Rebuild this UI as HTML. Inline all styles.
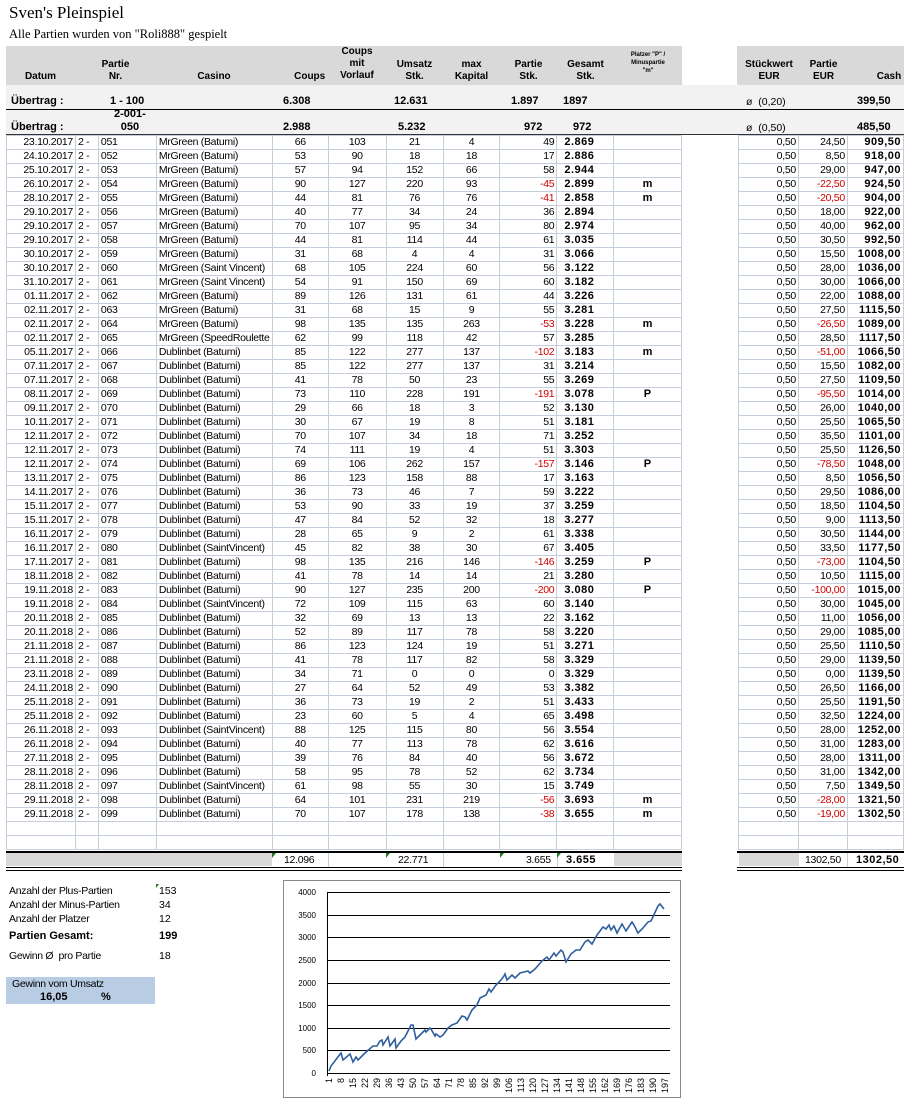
<!DOCTYPE html>
<html><head><meta charset="utf-8"><style>
body{margin:0;width:904px;height:1101px;background:#fff;position:relative;font-family:"Liberation Sans",sans-serif;overflow:hidden}
.a{position:absolute;white-space:nowrap}
table{border-collapse:collapse;table-layout:fixed;position:absolute;left:6px;font-size:10.5px;letter-spacing:-0.3px}
td{height:13px;padding:0 2px;border:1px solid #c5cfdc;overflow:hidden;white-space:nowrap;line-height:13px}
td.g{border:none}
.r{text-align:right}.c{text-align:center}.b{font-weight:bold}.n{color:#d00000}
td.b{font-size:11px;letter-spacing:0.5px}
td:nth-child(10){padding-left:7px}
.hd{font-weight:bold;font-size:10px;text-align:center;line-height:12px}
</style></head><body>
<div class="a" style="left:9px;top:3px;font-family:'Liberation Serif',serif;font-size:17px">Sven's Pleinspiel</div>
<div class="a" style="left:9px;top:27px;font-family:'Liberation Serif',serif;font-size:12.5px">Alle Partien wurden von "Roli888" gespielt</div>
<div class="a" style="left:6px;top:46px;width:676px;height:39px;background:#d9d9d9"></div>
<div class="a" style="left:737px;top:46px;width:167px;height:39px;background:#d9d9d9"></div>
<div class="a" style="left:6px;top:85px;width:898px;height:49px;background:#f2f2f2"></div>
<div class="a" style="left:6px;top:109px;width:898px;height:1px;background:#000"></div>
<div class="a" style="left:6px;top:134px;width:898px;height:1px;background:#333"></div>
<div class="a hd" style="left:6px;top:71px;width:69px">Datum</div>
<div class="a hd" style="left:75px;top:59px;width:81px">Partie<br>Nr.</div>
<div class="a hd" style="left:156px;top:71px;width:116px">Casino</div>
<div class="a hd" style="left:272px;top:71px;width:56px;text-align:right">Coups&nbsp;</div>
<div class="a hd" style="left:328px;top:46px;width:58px">Coups<br>mit<br>Vorlauf</div>
<div class="a hd" style="left:386px;top:59px;width:57px">Umsatz<br>Stk.</div>
<div class="a hd" style="left:443px;top:59px;width:57px">max<br>Kapital</div>
<div class="a hd" style="left:500px;top:59px;width:57px">Partie<br>Stk.</div>
<div class="a hd" style="left:557px;top:59px;width:57px">Gesamt<br>Stk.</div>
<div class="a hd" style="left:614px;top:51px;width:68px;font-size:6px;line-height:8px">Platzer "P" /<br>Minuspartie<br>"m"</div>
<div class="a hd" style="left:739px;top:59px;width:60px">Stückwert<br>EUR</div>
<div class="a hd" style="left:799px;top:59px;width:49px">Partie<br>EUR</div>
<div class="a hd" style="left:848px;top:71px;width:56px;text-align:right">Cash&nbsp;</div>
<div class="a b" style="left:11px;top:95px;font-size:11px">Übertrag :</div>
<div class="a b" style="left:110px;top:95px;font-size:11px">1 - 100</div>
<div class="a b" style="left:283px;top:95px;font-size:11px">6.308</div>
<div class="a b" style="left:394px;top:95px;font-size:11px">12.631</div>
<div class="a b" style="left:511px;top:95px;font-size:11px">1.897</div>
<div class="a b" style="left:563px;top:95px;font-size:11px">1897</div>
<div class="a" style="left:746px;top:96px;font-size:10.5px">ø&nbsp; (0,20)</div>
<div class="a b" style="left:857px;top:95px;font-size:11px">399,50</div>
<div class="a b" style="left:11px;top:121px;font-size:11px">Übertrag :</div>
<div class="a b" style="left:114px;top:108px;font-size:11px;line-height:13px;text-align:center">2-001-<br>050</div>
<div class="a b" style="left:283px;top:121px;font-size:11px">2.988</div>
<div class="a b" style="left:398px;top:121px;font-size:11px">5.232</div>
<div class="a b" style="left:524px;top:121px;font-size:11px">972</div>
<div class="a b" style="left:573px;top:121px;font-size:11px">972</div>
<div class="a" style="left:746px;top:122px;font-size:10.5px">ø&nbsp; (0,50)</div>
<div class="a b" style="left:857px;top:121px;font-size:11px">485,50</div>

<table style="top:135px">
<colgroup><col style="width:69px"><col style="width:23px"><col style="width:58px"><col style="width:116px"><col style="width:56px"><col style="width:58px"><col style="width:57px"><col style="width:57px"><col style="width:57px"><col style="width:57px"><col style="width:68px"><col style="width:57px"><col style="width:60px"><col style="width:49px"><col style="width:56px"></colgroup>
<tr><td class="r">23.10.2017</td><td>2 -</td><td>051</td><td>MrGreen (Batumi)</td><td class="c">66</td><td class="c">103</td><td class="c">21</td><td class="c">4</td><td class="r">49</td><td class="b">2.869</td><td></td><td class="g"></td><td class="r">0,50</td><td class="r">24,50</td><td class="r b">909,50</td></tr>
<tr><td class="r">24.10.2017</td><td>2 -</td><td>052</td><td>MrGreen (Batumi)</td><td class="c">53</td><td class="c">90</td><td class="c">18</td><td class="c">18</td><td class="r">17</td><td class="b">2.886</td><td></td><td class="g"></td><td class="r">0,50</td><td class="r">8,50</td><td class="r b">918,00</td></tr>
<tr><td class="r">25.10.2017</td><td>2 -</td><td>053</td><td>MrGreen (Batumi)</td><td class="c">57</td><td class="c">94</td><td class="c">152</td><td class="c">66</td><td class="r">58</td><td class="b">2.944</td><td></td><td class="g"></td><td class="r">0,50</td><td class="r">29,00</td><td class="r b">947,00</td></tr>
<tr><td class="r">26.10.2017</td><td>2 -</td><td>054</td><td>MrGreen (Batumi)</td><td class="c">90</td><td class="c">127</td><td class="c">220</td><td class="c">93</td><td class="r n">-45</td><td class="b">2.899</td><td class="c b">m</td><td class="g"></td><td class="r">0,50</td><td class="r n">-22,50</td><td class="r b">924,50</td></tr>
<tr><td class="r">28.10.2017</td><td>2 -</td><td>055</td><td>MrGreen (Batumi)</td><td class="c">44</td><td class="c">81</td><td class="c">76</td><td class="c">76</td><td class="r n">-41</td><td class="b">2.858</td><td class="c b">m</td><td class="g"></td><td class="r">0,50</td><td class="r n">-20,50</td><td class="r b">904,00</td></tr>
<tr><td class="r">29.10.2017</td><td>2 -</td><td>056</td><td>MrGreen (Batumi)</td><td class="c">40</td><td class="c">77</td><td class="c">34</td><td class="c">24</td><td class="r">36</td><td class="b">2.894</td><td></td><td class="g"></td><td class="r">0,50</td><td class="r">18,00</td><td class="r b">922,00</td></tr>
<tr><td class="r">29.10.2017</td><td>2 -</td><td>057</td><td>MrGreen (Batumi)</td><td class="c">70</td><td class="c">107</td><td class="c">95</td><td class="c">34</td><td class="r">80</td><td class="b">2.974</td><td></td><td class="g"></td><td class="r">0,50</td><td class="r">40,00</td><td class="r b">962,00</td></tr>
<tr><td class="r">29.10.2017</td><td>2 -</td><td>058</td><td>MrGreen (Batumi)</td><td class="c">44</td><td class="c">81</td><td class="c">114</td><td class="c">44</td><td class="r">61</td><td class="b">3.035</td><td></td><td class="g"></td><td class="r">0,50</td><td class="r">30,50</td><td class="r b">992,50</td></tr>
<tr><td class="r">30.10.2017</td><td>2 -</td><td>059</td><td>MrGreen (Batumi)</td><td class="c">31</td><td class="c">68</td><td class="c">4</td><td class="c">4</td><td class="r">31</td><td class="b">3.066</td><td></td><td class="g"></td><td class="r">0,50</td><td class="r">15,50</td><td class="r b">1008,00</td></tr>
<tr><td class="r">30.10.2017</td><td>2 -</td><td>060</td><td>MrGreen (Saint Vincent)</td><td class="c">68</td><td class="c">105</td><td class="c">224</td><td class="c">60</td><td class="r">56</td><td class="b">3.122</td><td></td><td class="g"></td><td class="r">0,50</td><td class="r">28,00</td><td class="r b">1036,00</td></tr>
<tr><td class="r">31.10.2017</td><td>2 -</td><td>061</td><td>MrGreen (Saint Vincent)</td><td class="c">54</td><td class="c">91</td><td class="c">150</td><td class="c">69</td><td class="r">60</td><td class="b">3.182</td><td></td><td class="g"></td><td class="r">0,50</td><td class="r">30,00</td><td class="r b">1066,00</td></tr>
<tr><td class="r">01.11.2017</td><td>2 -</td><td>062</td><td>MrGreen (Batumi)</td><td class="c">89</td><td class="c">126</td><td class="c">131</td><td class="c">61</td><td class="r">44</td><td class="b">3.226</td><td></td><td class="g"></td><td class="r">0,50</td><td class="r">22,00</td><td class="r b">1088,00</td></tr>
<tr><td class="r">02.11.2017</td><td>2 -</td><td>063</td><td>MrGreen (Batumi)</td><td class="c">31</td><td class="c">68</td><td class="c">15</td><td class="c">9</td><td class="r">55</td><td class="b">3.281</td><td></td><td class="g"></td><td class="r">0,50</td><td class="r">27,50</td><td class="r b">1115,50</td></tr>
<tr><td class="r">02.11.2017</td><td>2 -</td><td>064</td><td>MrGreen (Batumi)</td><td class="c">98</td><td class="c">135</td><td class="c">135</td><td class="c">263</td><td class="r n">-53</td><td class="b">3.228</td><td class="c b">m</td><td class="g"></td><td class="r">0,50</td><td class="r n">-26,50</td><td class="r b">1089,00</td></tr>
<tr><td class="r">02.11.2017</td><td>2 -</td><td>065</td><td>MrGreen (SpeedRoulette</td><td class="c">62</td><td class="c">99</td><td class="c">118</td><td class="c">42</td><td class="r">57</td><td class="b">3.285</td><td></td><td class="g"></td><td class="r">0,50</td><td class="r">28,50</td><td class="r b">1117,50</td></tr>
<tr><td class="r">05.11.2017</td><td>2 -</td><td>066</td><td>Dublinbet (Batumi)</td><td class="c">85</td><td class="c">122</td><td class="c">277</td><td class="c">137</td><td class="r n">-102</td><td class="b">3.183</td><td class="c b">m</td><td class="g"></td><td class="r">0,50</td><td class="r n">-51,00</td><td class="r b">1066,50</td></tr>
<tr><td class="r">07.11.2017</td><td>2 -</td><td>067</td><td>Dublinbet (Batumi)</td><td class="c">85</td><td class="c">122</td><td class="c">277</td><td class="c">137</td><td class="r">31</td><td class="b">3.214</td><td></td><td class="g"></td><td class="r">0,50</td><td class="r">15,50</td><td class="r b">1082,00</td></tr>
<tr><td class="r">07.11.2017</td><td>2 -</td><td>068</td><td>Dublinbet (Batumi)</td><td class="c">41</td><td class="c">78</td><td class="c">50</td><td class="c">23</td><td class="r">55</td><td class="b">3.269</td><td></td><td class="g"></td><td class="r">0,50</td><td class="r">27,50</td><td class="r b">1109,50</td></tr>
<tr><td class="r">08.11.2017</td><td>2 -</td><td>069</td><td>Dublinbet (Batumi)</td><td class="c">73</td><td class="c">110</td><td class="c">228</td><td class="c">191</td><td class="r n">-191</td><td class="b">3.078</td><td class="c b">P</td><td class="g"></td><td class="r">0,50</td><td class="r n">-95,50</td><td class="r b">1014,00</td></tr>
<tr><td class="r">09.11.2017</td><td>2 -</td><td>070</td><td>Dublinbet (Batumi)</td><td class="c">29</td><td class="c">66</td><td class="c">18</td><td class="c">3</td><td class="r">52</td><td class="b">3.130</td><td></td><td class="g"></td><td class="r">0,50</td><td class="r">26,00</td><td class="r b">1040,00</td></tr>
<tr><td class="r">10.11.2017</td><td>2 -</td><td>071</td><td>Dublinbet (Batumi)</td><td class="c">30</td><td class="c">67</td><td class="c">19</td><td class="c">8</td><td class="r">51</td><td class="b">3.181</td><td></td><td class="g"></td><td class="r">0,50</td><td class="r">25,50</td><td class="r b">1065,50</td></tr>
<tr><td class="r">12.11.2017</td><td>2 -</td><td>072</td><td>Dublinbet (Batumi)</td><td class="c">70</td><td class="c">107</td><td class="c">34</td><td class="c">18</td><td class="r">71</td><td class="b">3.252</td><td></td><td class="g"></td><td class="r">0,50</td><td class="r">35,50</td><td class="r b">1101,00</td></tr>
<tr><td class="r">12.11.2017</td><td>2 -</td><td>073</td><td>Dublinbet (Batumi)</td><td class="c">74</td><td class="c">111</td><td class="c">19</td><td class="c">4</td><td class="r">51</td><td class="b">3.303</td><td></td><td class="g"></td><td class="r">0,50</td><td class="r">25,50</td><td class="r b">1126,50</td></tr>
<tr><td class="r">12.11.2017</td><td>2 -</td><td>074</td><td>Dublinbet (Batumi)</td><td class="c">69</td><td class="c">106</td><td class="c">262</td><td class="c">157</td><td class="r n">-157</td><td class="b">3.146</td><td class="c b">P</td><td class="g"></td><td class="r">0,50</td><td class="r n">-78,50</td><td class="r b">1048,00</td></tr>
<tr><td class="r">13.11.2017</td><td>2 -</td><td>075</td><td>Dublinbet (Batumi)</td><td class="c">86</td><td class="c">123</td><td class="c">158</td><td class="c">88</td><td class="r">17</td><td class="b">3.163</td><td></td><td class="g"></td><td class="r">0,50</td><td class="r">8,50</td><td class="r b">1056,50</td></tr>
<tr><td class="r">14.11.2017</td><td>2 -</td><td>076</td><td>Dublinbet (Batumi)</td><td class="c">36</td><td class="c">73</td><td class="c">46</td><td class="c">7</td><td class="r">59</td><td class="b">3.222</td><td></td><td class="g"></td><td class="r">0,50</td><td class="r">29,50</td><td class="r b">1086,00</td></tr>
<tr><td class="r">15.11.2017</td><td>2 -</td><td>077</td><td>Dublinbet (Batumi)</td><td class="c">53</td><td class="c">90</td><td class="c">33</td><td class="c">19</td><td class="r">37</td><td class="b">3.259</td><td></td><td class="g"></td><td class="r">0,50</td><td class="r">18,50</td><td class="r b">1104,50</td></tr>
<tr><td class="r">15.11.2017</td><td>2 -</td><td>078</td><td>Dublinbet (Batumi)</td><td class="c">47</td><td class="c">84</td><td class="c">52</td><td class="c">32</td><td class="r">18</td><td class="b">3.277</td><td></td><td class="g"></td><td class="r">0,50</td><td class="r">9,00</td><td class="r b">1113,50</td></tr>
<tr><td class="r">16.11.2017</td><td>2 -</td><td>079</td><td>Dublinbet (Batumi)</td><td class="c">28</td><td class="c">65</td><td class="c">9</td><td class="c">2</td><td class="r">61</td><td class="b">3.338</td><td></td><td class="g"></td><td class="r">0,50</td><td class="r">30,50</td><td class="r b">1144,00</td></tr>
<tr><td class="r">16.11.2017</td><td>2 -</td><td>080</td><td>Dublinbet (SaintVincent)</td><td class="c">45</td><td class="c">82</td><td class="c">38</td><td class="c">30</td><td class="r">67</td><td class="b">3.405</td><td></td><td class="g"></td><td class="r">0,50</td><td class="r">33,50</td><td class="r b">1177,50</td></tr>
<tr><td class="r">17.11.2017</td><td>2 -</td><td>081</td><td>Dublinbet (Batumi)</td><td class="c">98</td><td class="c">135</td><td class="c">216</td><td class="c">146</td><td class="r n">-146</td><td class="b">3.259</td><td class="c b">P</td><td class="g"></td><td class="r">0,50</td><td class="r n">-73,00</td><td class="r b">1104,50</td></tr>
<tr><td class="r">18.11.2018</td><td>2 -</td><td>082</td><td>Dublinbet (Batumi)</td><td class="c">41</td><td class="c">78</td><td class="c">14</td><td class="c">14</td><td class="r">21</td><td class="b">3.280</td><td></td><td class="g"></td><td class="r">0,50</td><td class="r">10,50</td><td class="r b">1115,00</td></tr>
<tr><td class="r">19.11.2018</td><td>2 -</td><td>083</td><td>Dublinbet (Batumi)</td><td class="c">90</td><td class="c">127</td><td class="c">235</td><td class="c">200</td><td class="r n">-200</td><td class="b">3.080</td><td class="c b">P</td><td class="g"></td><td class="r">0,50</td><td class="r n">-100,00</td><td class="r b">1015,00</td></tr>
<tr><td class="r">19.11.2018</td><td>2 -</td><td>084</td><td>Dublinbet (SaintVincent)</td><td class="c">72</td><td class="c">109</td><td class="c">115</td><td class="c">63</td><td class="r">60</td><td class="b">3.140</td><td></td><td class="g"></td><td class="r">0,50</td><td class="r">30,00</td><td class="r b">1045,00</td></tr>
<tr><td class="r">20.11.2018</td><td>2 -</td><td>085</td><td>Dublinbet (Batumi)</td><td class="c">32</td><td class="c">69</td><td class="c">13</td><td class="c">13</td><td class="r">22</td><td class="b">3.162</td><td></td><td class="g"></td><td class="r">0,50</td><td class="r">11,00</td><td class="r b">1056,00</td></tr>
<tr><td class="r">20.11.2018</td><td>2 -</td><td>086</td><td>Dublinbet (Batumi)</td><td class="c">52</td><td class="c">89</td><td class="c">117</td><td class="c">78</td><td class="r">58</td><td class="b">3.220</td><td></td><td class="g"></td><td class="r">0,50</td><td class="r">29,00</td><td class="r b">1085,00</td></tr>
<tr><td class="r">21.11.2018</td><td>2 -</td><td>087</td><td>Dublinbet (Batumi)</td><td class="c">86</td><td class="c">123</td><td class="c">124</td><td class="c">19</td><td class="r">51</td><td class="b">3.271</td><td></td><td class="g"></td><td class="r">0,50</td><td class="r">25,50</td><td class="r b">1110,50</td></tr>
<tr><td class="r">21.11.2018</td><td>2 -</td><td>088</td><td>Dublinbet (Batumi)</td><td class="c">41</td><td class="c">78</td><td class="c">117</td><td class="c">82</td><td class="r">58</td><td class="b">3.329</td><td></td><td class="g"></td><td class="r">0,50</td><td class="r">29,00</td><td class="r b">1139,50</td></tr>
<tr><td class="r">23.11.2018</td><td>2 -</td><td>089</td><td>Dublinbet (Batumi)</td><td class="c">34</td><td class="c">71</td><td class="c">0</td><td class="c">0</td><td class="r">0</td><td class="b">3.329</td><td></td><td class="g"></td><td class="r">0,50</td><td class="r">0,00</td><td class="r b">1139,50</td></tr>
<tr><td class="r">24.11.2018</td><td>2 -</td><td>090</td><td>Dublinbet (Batumi)</td><td class="c">27</td><td class="c">64</td><td class="c">52</td><td class="c">49</td><td class="r">53</td><td class="b">3.382</td><td></td><td class="g"></td><td class="r">0,50</td><td class="r">26,50</td><td class="r b">1166,00</td></tr>
<tr><td class="r">25.11.2018</td><td>2 -</td><td>091</td><td>Dublinbet (Batumi)</td><td class="c">36</td><td class="c">73</td><td class="c">19</td><td class="c">2</td><td class="r">51</td><td class="b">3.433</td><td></td><td class="g"></td><td class="r">0,50</td><td class="r">25,50</td><td class="r b">1191,50</td></tr>
<tr><td class="r">25.11.2018</td><td>2 -</td><td>092</td><td>Dublinbet (Batumi)</td><td class="c">23</td><td class="c">60</td><td class="c">5</td><td class="c">4</td><td class="r">65</td><td class="b">3.498</td><td></td><td class="g"></td><td class="r">0,50</td><td class="r">32,50</td><td class="r b">1224,00</td></tr>
<tr><td class="r">26.11.2018</td><td>2 -</td><td>093</td><td>Dublinbet (SaintVincent)</td><td class="c">88</td><td class="c">125</td><td class="c">115</td><td class="c">80</td><td class="r">56</td><td class="b">3.554</td><td></td><td class="g"></td><td class="r">0,50</td><td class="r">28,00</td><td class="r b">1252,00</td></tr>
<tr><td class="r">26.11.2018</td><td>2 -</td><td>094</td><td>Dublinbet (Batumi)</td><td class="c">40</td><td class="c">77</td><td class="c">113</td><td class="c">78</td><td class="r">62</td><td class="b">3.616</td><td></td><td class="g"></td><td class="r">0,50</td><td class="r">31,00</td><td class="r b">1283,00</td></tr>
<tr><td class="r">27.11.2018</td><td>2 -</td><td>095</td><td>Dublinbet (Batumi)</td><td class="c">39</td><td class="c">76</td><td class="c">84</td><td class="c">40</td><td class="r">56</td><td class="b">3.672</td><td></td><td class="g"></td><td class="r">0,50</td><td class="r">28,00</td><td class="r b">1311,00</td></tr>
<tr><td class="r">28.11.2018</td><td>2 -</td><td>096</td><td>Dublinbet (Batumi)</td><td class="c">58</td><td class="c">95</td><td class="c">78</td><td class="c">52</td><td class="r">62</td><td class="b">3.734</td><td></td><td class="g"></td><td class="r">0,50</td><td class="r">31,00</td><td class="r b">1342,00</td></tr>
<tr><td class="r">28.11.2018</td><td>2 -</td><td>097</td><td>Dublinbet (SaintVincent)</td><td class="c">61</td><td class="c">98</td><td class="c">55</td><td class="c">30</td><td class="r">15</td><td class="b">3.749</td><td></td><td class="g"></td><td class="r">0,50</td><td class="r">7,50</td><td class="r b">1349,50</td></tr>
<tr><td class="r">29.11.2018</td><td>2 -</td><td>098</td><td>Dublinbet (Batumi)</td><td class="c">64</td><td class="c">101</td><td class="c">231</td><td class="c">219</td><td class="r n">-56</td><td class="b">3.693</td><td class="c b">m</td><td class="g"></td><td class="r">0,50</td><td class="r n">-28,00</td><td class="r b">1321,50</td></tr>
<tr><td class="r">29.11.2018</td><td>2 -</td><td>099</td><td>Dublinbet (Batumi)</td><td class="c">70</td><td class="c">107</td><td class="c">178</td><td class="c">138</td><td class="r n">-38</td><td class="b">3.655</td><td class="c b">m</td><td class="g"></td><td class="r">0,50</td><td class="r n">-19,00</td><td class="r b">1302,50</td></tr>
<tr><td></td><td></td><td></td><td></td><td></td><td></td><td></td><td></td><td></td><td></td><td></td><td class="g"></td><td></td><td></td><td></td></tr>
<tr><td></td><td></td><td></td><td></td><td></td><td></td><td></td><td></td><td></td><td></td><td></td><td class="g"></td><td></td><td></td><td></td></tr>
</table>

<div class="a" style="left:6px;top:851px;width:676px;height:2px;background:#000"></div>
<div class="a" style="left:737px;top:851px;width:167px;height:2px;background:#000"></div>
<div class="a" style="left:6px;top:853px;width:266px;height:13px;background:#d9d9d9"></div>
<div class="a" style="left:614px;top:853px;width:68px;height:13px;background:#d9d9d9"></div>
<div class="a" style="left:739px;top:853px;width:60px;height:13px;background:#d9d9d9"></div>
<div class="a" style="left:6px;top:867px;width:676px;height:1px;background:#000"></div>
<div class="a" style="left:6px;top:870px;width:676px;height:1px;background:#000"></div>
<div class="a" style="left:737px;top:867px;width:167px;height:1px;background:#000"></div>
<div class="a" style="left:737px;top:870px;width:167px;height:1px;background:#000"></div>
<div class="a" style="left:328px;top:853px;width:1px;height:14px;background:#c5cfdc"></div>
<div class="a" style="left:443px;top:853px;width:1px;height:14px;background:#c5cfdc"></div>
<div class="a" style="left:557px;top:853px;width:1px;height:14px;background:#c5cfdc"></div>
<div class="a" style="left:847px;top:853px;width:1px;height:14px;background:#c5cfdc"></div>
<div class="a" style="left:272px;top:853px;width:0;height:0;border-top:5px solid #217a21;border-right:4px solid transparent"></div>
<div class="a" style="left:386px;top:853px;width:0;height:0;border-top:5px solid #217a21;border-right:4px solid transparent"></div>
<div class="a" style="left:500px;top:853px;width:0;height:0;border-top:5px solid #217a21;border-right:4px solid transparent"></div>
<div class="a" style="left:557px;top:853px;width:0;height:0;border-top:5px solid #217a21;border-right:4px solid transparent"></div>
<div class="a" style="left:284px;top:854px;font-size:10.5px;letter-spacing:-0.3px">12.096</div>
<div class="a" style="left:398px;top:854px;font-size:10.5px;letter-spacing:-0.3px">22.771</div>
<div class="a" style="left:526px;top:854px;font-size:10.5px;letter-spacing:-0.3px">3.655</div>
<div class="a b" style="left:566px;top:854px;font-size:11px;letter-spacing:0.5px">3.655</div>
<div class="a" style="left:805px;top:854px;font-size:10.5px;letter-spacing:-0.3px">1302,50</div>
<div class="a b" style="left:856px;top:854px;font-size:11px;letter-spacing:0.5px">1302,50</div>

<div class="a" style="left:9px;top:884px;font-size:10.5px;letter-spacing:-0.3px;line-height:14px">Anzahl der Plus-Partien<br>Anzahl der Minus-Partien<br>Anzahl der Platzer</div>
<div class="a" style="left:159px;top:884px;font-size:10.5px;line-height:14px">153<br>34<br>12</div>
<div class="a" style="left:156px;top:884px;width:0;height:0;border-top:4px solid #217a21;border-right:3px solid transparent"></div>
<div class="a b" style="left:9px;top:930px;font-size:11px">Partien Gesamt:</div>
<div class="a b" style="left:159px;top:930px;font-size:11px">199</div>
<div class="a" style="left:9px;top:950px;font-size:10.5px;letter-spacing:-0.3px">Gewinn Ø&nbsp; pro Partie</div>
<div class="a" style="left:159px;top:950px;font-size:10.5px">18</div>
<div class="a" style="left:6px;top:977px;width:149px;height:27px;background:#b8cce4"></div>
<div class="a" style="left:12px;top:978px;font-size:10.5px;letter-spacing:-0.3px">Gewinn vom Umsatz</div>
<div class="a b" style="left:40px;top:991px;font-size:11px">16,05</div>
<div class="a b" style="left:101px;top:991px;font-size:11px">%</div>

<svg class="a" style="left:0;top:0" width="904" height="1101">
<rect x="283.5" y="880.5" width="397" height="217" fill="#fff" stroke="#888"/>
<g stroke="#000" stroke-width="1">
<line x1="327" y1="892.5" x2="670" y2="892.5"/><line x1="327" y1="915.5" x2="670" y2="915.5"/><line x1="327" y1="937.5" x2="670" y2="937.5"/><line x1="327" y1="960.5" x2="670" y2="960.5"/><line x1="327" y1="983.5" x2="670" y2="983.5"/><line x1="327" y1="1005.5" x2="670" y2="1005.5"/><line x1="327" y1="1028.5" x2="670" y2="1028.5"/><line x1="327" y1="1050.5" x2="670" y2="1050.5"/><line x1="327" y1="1073.5" x2="670" y2="1073.5"/>
<line x1="327.5" y1="892" x2="327.5" y2="1076"/>
</g>
<g font-family="Liberation Sans,sans-serif" font-size="8" text-anchor="end">
<text x="316" y="895">4000</text><text x="316" y="918">3500</text><text x="316" y="940">3000</text><text x="316" y="963">2500</text><text x="316" y="986">2000</text><text x="316" y="1008">1500</text><text x="316" y="1031">1000</text><text x="316" y="1053">500</text><text x="316" y="1076">0</text>
</g>
<g font-family="Liberation Sans,sans-serif" font-size="9" text-anchor="end">
<text transform="translate(332,1078) rotate(-90)">1</text><text transform="translate(344,1078) rotate(-90)">8</text><text transform="translate(356,1078) rotate(-90)">15</text><text transform="translate(368,1078) rotate(-90)">22</text><text transform="translate(380,1078) rotate(-90)">29</text><text transform="translate(392,1078) rotate(-90)">36</text><text transform="translate(404,1078) rotate(-90)">43</text><text transform="translate(416,1078) rotate(-90)">50</text><text transform="translate(428,1078) rotate(-90)">57</text><text transform="translate(440,1078) rotate(-90)">64</text><text transform="translate(452,1078) rotate(-90)">71</text><text transform="translate(464,1078) rotate(-90)">78</text><text transform="translate(476,1078) rotate(-90)">85</text><text transform="translate(488,1078) rotate(-90)">92</text><text transform="translate(500,1078) rotate(-90)">99</text><text transform="translate(512,1078) rotate(-90)">106</text><text transform="translate(524,1078) rotate(-90)">113</text><text transform="translate(536,1078) rotate(-90)">120</text><text transform="translate(548,1078) rotate(-90)">127</text><text transform="translate(560,1078) rotate(-90)">134</text><text transform="translate(572,1078) rotate(-90)">141</text><text transform="translate(584,1078) rotate(-90)">148</text><text transform="translate(596,1078) rotate(-90)">155</text><text transform="translate(608,1078) rotate(-90)">162</text><text transform="translate(620,1078) rotate(-90)">169</text><text transform="translate(632,1078) rotate(-90)">176</text><text transform="translate(644,1078) rotate(-90)">183</text><text transform="translate(656,1078) rotate(-90)">190</text><text transform="translate(668,1078) rotate(-90)">197</text>
</g>
<polyline fill="none" stroke="#2e5f9e" stroke-width="1.6" points="
329,1071 331,1066 341,1053 343,1060 350,1054 353,1062 356,1057 358,1060 365,1053 373,1046 377,1046 380,1041 382,1040 383,1045 388,1037 390,1046 395,1039 396,1048 401,1041 405,1037 411,1025 413,1025 416,1039 420,1035 425,1030 426,1032 430,1028 431,1029 435,1036 436,1034 440,1037 443,1035 448,1028 452,1025 457,1023 462,1016 465,1017 467,1020 472,1010 477,1005 480,998 486,995 489,989 491,992 496,985 501,980 504,976 505,974 507,980 512,975 515,978 520,973 528,971 530,973 535,969 542,961 547,957 549,960 554,953 556,956 561,950 563,952 566,962 571,954 576,950 580,950 585,942 588,940 592,944 597,935 603,927 606,929 609,925 611,930 614,926 617,933 622,924 626,931 632,922 634,925 638,933 643,928 648,922 651,921 658,906 660,904 664,909"/>
</svg>
</body></html>
